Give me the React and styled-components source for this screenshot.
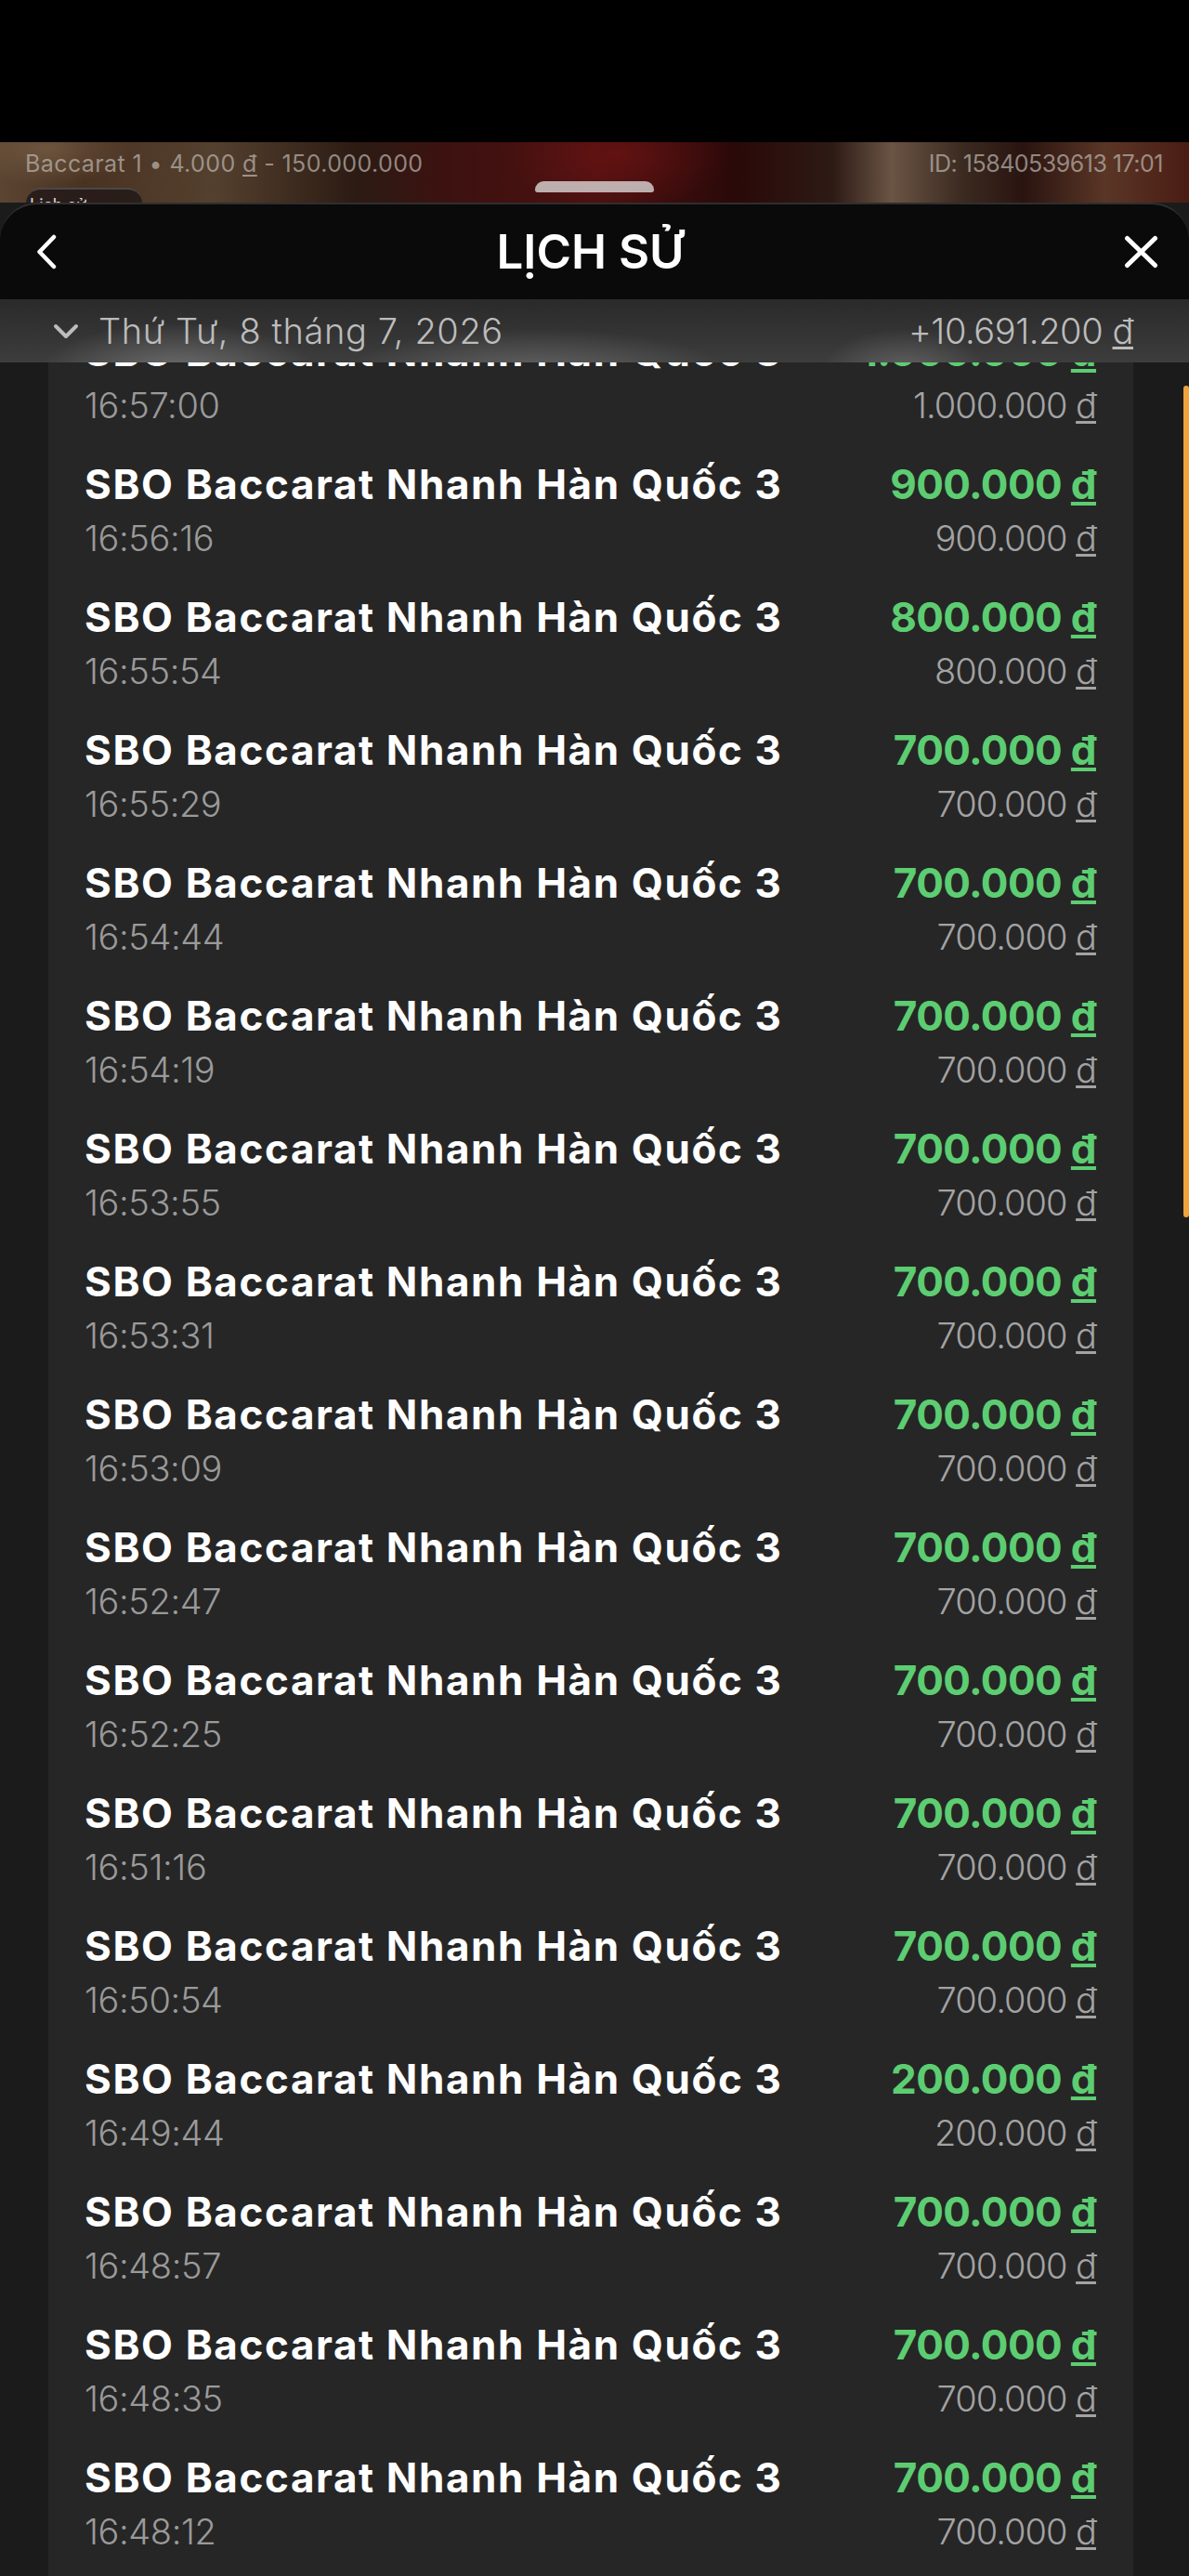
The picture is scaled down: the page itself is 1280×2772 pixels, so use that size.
import React from "react";
import styled, { createGlobalStyle } from "styled-components";

const GlobalStyle = createGlobalStyle`
  body {
    margin: 0;
    background: #1b1b1b;
    font-family: Inter, "Noto Sans", sans-serif;
  }
`;

const Page = styled.div`
  width: 1280px;
  height: 2772px;
  display: flex;
  flex-direction: column;
  overflow: hidden;
  background: #1b1b1b;
`;

const StatusArea = styled.div`
  height: 153px;
  background: #000;
  flex-shrink: 0;
`;

const Backdrop = styled.div`
  height: 65px;
  flex-shrink: 0;
  overflow: hidden;
  background:
    radial-gradient(ellipse 120px 60px at 52% 20%, rgba(120, 20, 20, 0.55), transparent),
    radial-gradient(ellipse 90px 40px at 4% 10%, rgba(120, 95, 70, 0.7), transparent),
    linear-gradient(90deg, #5b4531 0%, #4a3222 7%, #54402e 18%, #2c1b13 30%, #3b1210 37%,
      #4c1010 50%, #2a0909 62%, #2d1a14 70%, #6a5444 75%, #3b2a20 81%, #2a1410 86%,
      #5a3626 93%, #4a1c14 100%);
`;

const InfoRow = styled.div`
  display: flex;
  justify-content: space-between;
  padding: 8px 28px 0 27px;
  font-size: 25px;
  line-height: 30px;
  color: rgba(190, 185, 180, 0.7);
`;

const InfoText = styled.span`
  letter-spacing: ${(p) => p.$spacing}px;
`;

const HandleRow = styled.div`
  display: grid;
  grid-template-columns: 1fr auto 1fr;
  align-items: start;
  padding: 4px 28px 0 28px;
`;

const Tab = styled.div`
  justify-self: start;
  margin-top: 7px;
  width: 125px;
  height: 40px;
  box-sizing: border-box;
  border-radius: 16px;
  border-top: 2px solid rgba(90, 90, 90, 0.7);
  background: rgba(35, 25, 25, 0.85);
  color: #ddd;
  font-size: 18px;
  line-height: 22px;
  padding: 6px 0 0 4px;
`;

const Handle = styled.div`
  width: 128px;
  height: 12px;
  border-radius: 10px 10px 3px 3px;
  background: rgba(215, 210, 210, 0.82);
`;

const Sheet = styled.div`
  flex: 1;
  display: flex;
  flex-direction: column;
  min-height: 0;
  background: #0a0a0a;
  border-radius: 40px 40px 0 0;
  border-top: 2px solid #2f2f2f;
`;

const Header = styled.div`
  height: 102px;
  flex-shrink: 0;
  display: flex;
  align-items: center;
  justify-content: space-between;
  padding: 0 33px 0 39px;
`;

const Title = styled.h1`
  margin: 0;
  font-size: 51px;
  line-height: 60px;
  font-weight: 600;
  color: #fff;
  letter-spacing: 0px;
`;

const IconButton = styled.button`
  border: 0;
  padding: 0;
  background: none;
  display: flex;
  width: ${(p) => p.$w}px;
  height: ${(p) => p.$h}px;
`;

const DateBar = styled.div`
  height: 68px;
  flex-shrink: 0;
  display: flex;
  align-items: center;
  padding: 0 60px 0 57px;
  color: #bcbcbc;
  font-size: 38px;
  line-height: 46px;
  font-weight: 300;
  background:
    radial-gradient(ellipse 150px 55px at 15% 118%, rgba(160, 160, 160, 0.5), transparent),
    radial-gradient(ellipse 210px 50px at 45% 120%, rgba(160, 160, 160, 0.4), transparent),
    radial-gradient(ellipse 90px 50px at 76% 120%, rgba(160, 160, 160, 0.4), transparent),
    linear-gradient(180deg, #2a2a2a 0%, #343434 55%, #3d3d3d 100%);
`;

const DateLabel = styled.span`
  margin-left: 21px;
  flex: 1;
  letter-spacing: 0.6px;
`;

const DateTotal = styled.span`
  letter-spacing: -0.4px;
`;

const ListArea = styled.div`
  flex: 1;
  min-height: 0;
  display: flex;
`;

const Gutter = styled.div`
  width: ${(p) => p.$w}px;
  flex-shrink: 0;
  background: #1b1b1b;
`;

const ScrollThumb = styled.div`
  margin: 25px 0 0 54px;
  width: 6px;
  height: 895px;
  border-radius: 3px;
  background: #f0a23c;
`;

const Panel = styled.div`
  width: 1168px;
  flex-shrink: 0;
  background: #262626;
  overflow: hidden;
`;

const Rows = styled.div`
  margin-top: -56px;
`;

const Row = styled.div`
  height: 143px;
  box-sizing: border-box;
  padding: 18px 40px 19px 39px;
  display: flex;
  flex-direction: column;
  gap: 10px;
`;

const Line = styled.div`
  display: flex;
  justify-content: space-between;
  align-items: baseline;
`;

const GameName = styled.span`
  font-size: 44px;
  line-height: 52px;
  font-weight: 700;
  color: #fff;
  letter-spacing: 1.6px;
`;

const Win = styled.span`
  font-size: 44px;
  line-height: 52px;
  font-weight: 700;
  color: #5dcd72;
  letter-spacing: -0.6px;
`;

const Sub = styled.span`
  font-size: 38px;
  line-height: 44px;
  font-weight: 300;
  color: ${(p) => (p.$light ? "#a3a3a3" : "#9a9a9a")};
  letter-spacing: ${(p) => (p.$light ? -1 : -0.4)}px;
`;

const Dong = styled.span`
  text-decoration: underline;
  text-underline-offset: 3px;
`;

const Money = ({ value }) => (
  <>
    {value} <Dong>đ</Dong>
  </>
);

const rows = [
  ["16:57:00", "1.000.000"],
  ["16:56:16", "900.000"],
  ["16:55:54", "800.000"],
  ["16:55:29", "700.000"],
  ["16:54:44", "700.000"],
  ["16:54:19", "700.000"],
  ["16:53:55", "700.000"],
  ["16:53:31", "700.000"],
  ["16:53:09", "700.000"],
  ["16:52:47", "700.000"],
  ["16:52:25", "700.000"],
  ["16:51:16", "700.000"],
  ["16:50:54", "700.000"],
  ["16:49:44", "200.000"],
  ["16:48:57", "700.000"],
  ["16:48:35", "700.000"],
  ["16:48:12", "700.000"],
];

const App = () => (
  <Page>
    <GlobalStyle />
    <StatusArea />
    <Backdrop>
      <InfoRow>
        <InfoText $spacing={0.4}>
          Baccarat 1 • 4.000 <Dong>đ</Dong> - 150.000.000
        </InfoText>
        <InfoText $spacing={-0.5}>ID: 15840539613 17:01</InfoText>
      </InfoRow>
      <HandleRow>
        <Tab>Lịch sử</Tab>
        <Handle />
        <span />
      </HandleRow>
    </Backdrop>
    <Sheet>
      <Header>
        <IconButton $w={22} $h={38} aria-label="Quay lại">
          <svg width="22" height="38" viewBox="0 0 22 38" fill="none">
            <path d="M19 3 L3.5 19 L19 35" stroke="#fff" strokeWidth="4.5" strokeLinecap="round" strokeLinejoin="round" />
          </svg>
        </IconButton>
        <Title>LỊCH SỬ</Title>
        <IconButton $w={37} $h={36} aria-label="Đóng">
          <svg width="37" height="36" viewBox="0 0 37 36" fill="none">
            <path d="M3.5 3.5 L33.5 32.5 M33.5 3.5 L3.5 32.5" stroke="#fff" strokeWidth="5" strokeLinecap="round" />
          </svg>
        </IconButton>
      </Header>
      <DateBar>
        <svg width="28" height="17" viewBox="0 0 28 17" fill="none">
          <path d="M3 3 L14 14 L25 3" stroke="#bcbcbc" strokeWidth="4" strokeLinecap="round" strokeLinejoin="round" />
        </svg>
        <DateLabel>Thứ Tư, 8 tháng 7, 2026</DateLabel>
        <DateTotal>
          +10.691.200 <Dong>đ</Dong>
        </DateTotal>
      </DateBar>
      <ListArea>
        <Gutter $w={52} />
        <Panel>
          <Rows>
            {rows.map(([time, amount]) => (
              <Row key={time}>
                <Line>
                  <GameName>SBO Baccarat Nhanh Hàn Quốc 3</GameName>
                  <Win>
                    <Money value={amount} />
                  </Win>
                </Line>
                <Line>
                  <Sub>{time}</Sub>
                  <Sub $light>
                    <Money value={amount} />
                  </Sub>
                </Line>
              </Row>
            ))}
          </Rows>
        </Panel>
        <Gutter $w={60}>
          <ScrollThumb />
        </Gutter>
      </ListArea>
    </Sheet>
  </Page>
);

export default App;
